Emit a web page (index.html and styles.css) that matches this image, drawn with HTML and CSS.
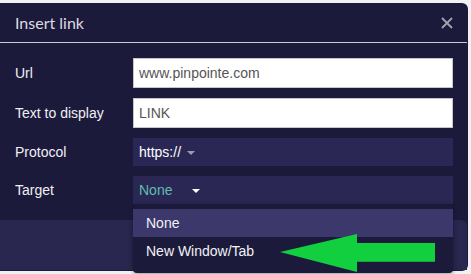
FILE: index.html
```html
<!DOCTYPE html>
<html>
<head>
<meta charset="utf-8">
<link rel="stylesheet" href="styles.css">
</head>
<body>
<div class="dialog">
  <div class="header">
    <span class="title">Insert link</span>
    <svg class="close" width="12" height="12" viewBox="0 0 12 12"><path d="M1 1L11 11M11 1L1 11" stroke="#a3a3ad" stroke-width="1.8" fill="none"/></svg>
  </div>
  <div class="body">
    <div class="row"><label class="label">Url</label><div class="input">www.pinpointe.com</div></div>
    <div class="row"><label class="label">Text to display</label><div class="input">LINK</div></div>
    <div class="row"><label class="label">Protocol</label><div class="select"><span class="val">https://</span><span class="caret grey"></span></div></div>
    <div class="row"><label class="label">Target</label><div class="select"><span class="val teal">None</span><span class="caret white"></span></div></div>
  </div>
  <div class="footer"></div>
  <div class="menu">
    <div class="item active">None</div>
    <div class="item">New Window/Tab</div>
  </div>
  <svg class="arrow" width="160" height="40" viewBox="0 0 160 40"><polygon points="0,18 77,0 77,9 155,9 155,27 77,27 77,38" fill="#12cf40"/><path d="M77 27.5H155" stroke="#0fa63a" stroke-width="1"/></svg>
</div>
</body>
</html>
```
FILE: styles.css
```css
html, body { margin: 0; padding: 0; }
body { background: #f1f1f3; width: 471px; height: 274px; overflow: hidden; font-family: "Liberation Sans", Arial, sans-serif; }
.dialog { position: relative; margin-top: 3px; width: 468px; height: 268px; background: #1c1a3b; border-radius: 0 6px 6px 0; display: flex; flex-direction: column; }
.header { height: 39px; padding: 0 14px 0 15px; display: flex; align-items: center; justify-content: space-between; border-bottom: 1px solid #c9c9cf; box-sizing: content-box; margin-right: 1px; }
.title { font-family: Lato, sans-serif; font-size: 16px; color: #dcdce2; }
.close { margin-top: 1px; }
.body { padding: 15px 15px 0 15px; display: flex; flex-direction: column; gap: 10px; }
.row { display: flex; align-items: center; }
.label { width: 118px; font-size: 14px; color: #f0f0f4; }
.input { width: 320px; height: 30px; box-sizing: border-box; background: #fff; border: 1px solid #c6c6c6; padding-left: 5px; display: flex; align-items: center; font-size: 14px; color: #555; }
.select { width: 320px; height: 28px; box-sizing: border-box; background: #2a2754; display: flex; align-items: center; padding-left: 6px; font-size: 14px; color: #fff; }
.row:nth-child(4) .select { height: 28px; }
.val { display: inline-block; }
.val.teal { color: #62bcae; width: 47px; }
.caret { width: 0; height: 0; border-left: 4px solid transparent; border-right: 4px solid transparent; border-top: 4px solid #9d9cb0; margin-left: 6px; margin-top: 1px; }
.caret.white { border-top-color: #fff; }
.footer { margin-top: 16px; height: 50px; background: #29264f; border-radius: 0 6px 0 0; margin-right: 1px; }
.menu { position: absolute; left: 133px; top: 201px; width: 320px; box-sizing: border-box; padding: 5px 0 8px; background: #1c1a3a; border-radius: 4px; box-shadow: 0 1px 4px rgba(0,0,0,0.4); }
.item { height: 28px; display: flex; align-items: center; padding-left: 13px; font-size: 14px; color: #f2f2f6; }
.item.active { background: #3c386c; }
.arrow { position: absolute; left: 280px; top: 231px; }
```
